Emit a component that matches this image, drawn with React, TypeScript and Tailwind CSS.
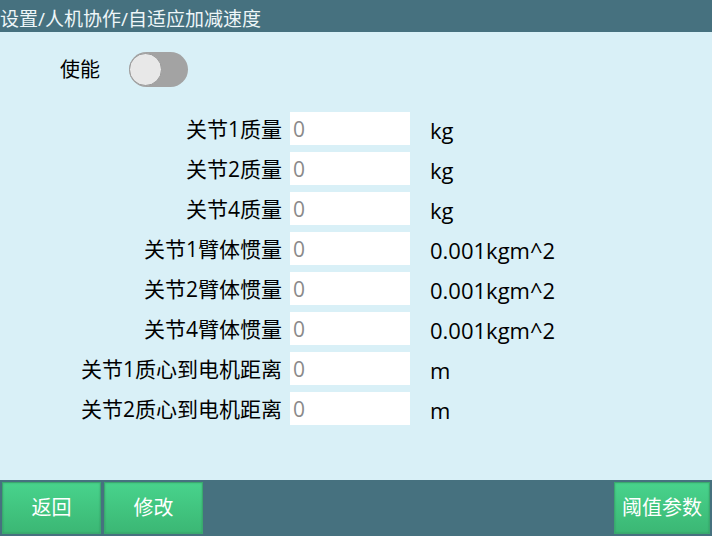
import React from "react";

const rows = [
  { label: "关节1质量", unit: "kg" },
  { label: "关节2质量", unit: "kg" },
  { label: "关节4质量", unit: "kg" },
  { label: "关节1臂体惯量", unit: "0.001kgm^2" },
  { label: "关节2臂体惯量", unit: "0.001kgm^2" },
  { label: "关节4臂体惯量", unit: "0.001kgm^2" },
  { label: "关节1质心到电机距离", unit: "m" },
  { label: "关节2质心到电机距离", unit: "m" },
];

function Toggle() {
  return (
    <div className="relative w-[59px] h-[35px] rounded-full bg-[#a3a3a3]">
      <div className="absolute left-0 top-[1px] w-[33px] h-[33px] rounded-full bg-[#e8e8e8] border border-[#9a9a9a]" />
    </div>
  );
}

function GreenButton({ children, w }: { children: React.ReactNode; w: string }) {
  return (
    <button
      className={`${w} h-[52px] flex items-center justify-center text-[20px] text-white bg-gradient-to-b from-[#48d38c] to-[#3bb774] border border-[#3aa86e] shadow-[inset_0_0_2px_rgba(0,0,0,0.2)]`}
    >
      {children}
    </button>
  );
}

export default function App() {
  return (
    <div
      className="w-[712px] h-[536px] flex flex-col bg-[#d9f0f7] text-black overflow-hidden"
      style={{ fontFamily: '"Open Sans", "Noto Sans CJK SC", sans-serif' }}
    >
      <div className="h-[32px] bg-[#46717f] flex items-end">
        <span className="text-[19px] leading-[26px] text-[#eef6f8]">设置/人机协作/自适应加减速度</span>
      </div>

      <main className="flex-1 flex flex-col">
        <div className="flex items-center mt-[20px] pl-[60px] gap-[29px]">
          <span className="text-[20px]">使能</span>
          <Toggle />
        </div>

        <div className="flex flex-col gap-[7px] mt-[25px]">
          {rows.map((r) => (
            <div key={r.label} className="flex items-center h-[33px]">
              <span className="w-[282px] text-right text-[21px] leading-none pt-[2px]">{r.label}</span>
              <input
                placeholder="0"
                className="ml-[8px] w-[120px] h-[33px] bg-white px-[3px] text-[21px] placeholder:text-[#8a8a8a] outline-none"
              />
              <span className="ml-[20px] text-[22px] leading-none pt-[2px]">{r.unit}</span>
            </div>
          ))}
        </div>
      </main>

      <div className="h-[56px] bg-[#46717f] flex items-center px-[2px]">
        <div className="flex gap-[3px]">
          <GreenButton w="w-[99px]">返回</GreenButton>
          <GreenButton w="w-[99px]">修改</GreenButton>
        </div>
        <div className="ml-auto">
          <GreenButton w="w-[96px]">阈值参数</GreenButton>
        </div>
      </div>
    </div>
  );
}
